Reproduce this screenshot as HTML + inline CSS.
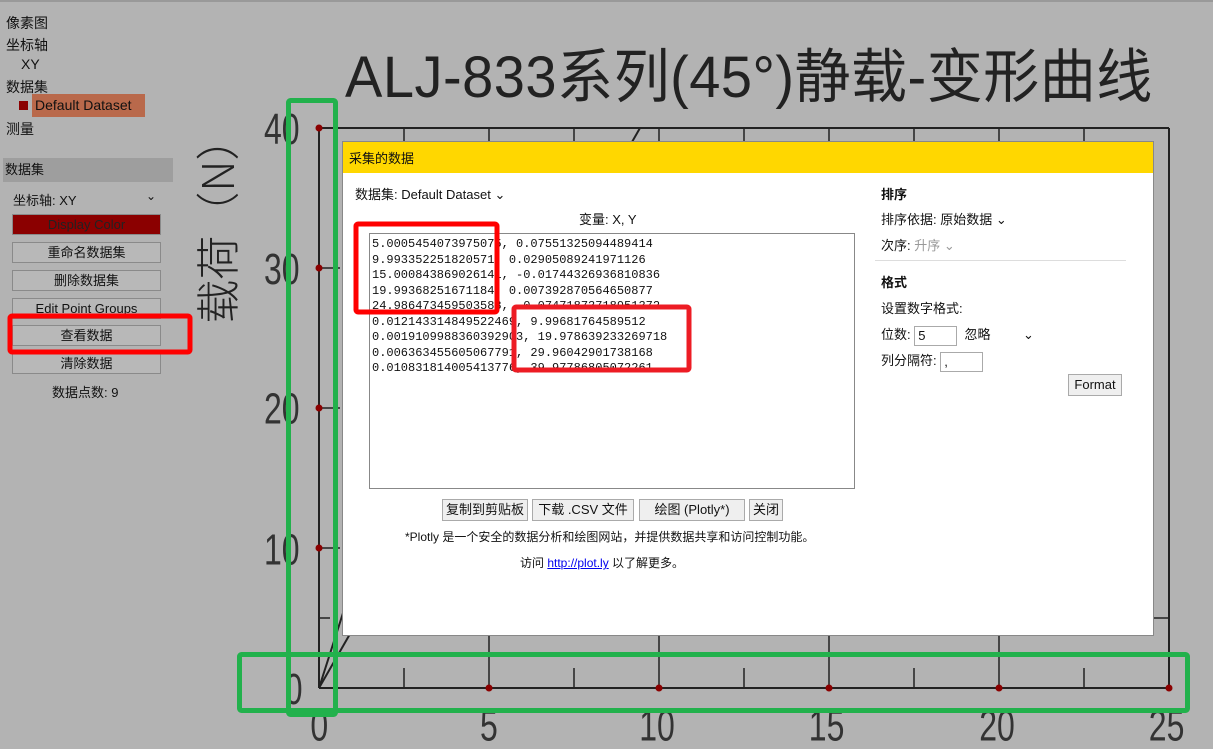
<!DOCTYPE html>
<html><head><meta charset="utf-8"><style>
body{margin:0;width:1213px;height:749px;background:#b3b3b3;position:relative;overflow:hidden;font-family:"Liberation Sans","Noto Sans CJK SC",sans-serif;color:#111}
.a{position:absolute}
.side{font-size:14px}
.btn{position:absolute;left:12px;width:147px;height:19px;border:1px solid #8a8a8a;background:#b8b8b8;font-size:13px;text-align:center;line-height:19px}
.mb{position:absolute;top:357px;height:20px;border:1px solid #aaa;background:#efefef;font-size:13px;line-height:20px;text-align:center}
pre{margin:0;font-family:"Liberation Mono","Noto Sans CJK SC",monospace;font-size:12px;line-height:15.5px}
</style></head><body>
<div class="a" style="left:0;top:0;width:1213px;height:2px;background:#999"></div>
<div class="side">
<div class="a" style="left:6px;top:13px">像素图</div>
<div class="a" style="left:6px;top:35px">坐标轴</div>
<div class="a" style="left:21px;top:56px">XY</div>
<div class="a" style="left:6px;top:77px">数据集</div>
<div class="a" style="left:19px;top:101px;width:9px;height:9px;background:#8b0000"></div>
<div class="a" style="left:32px;top:94px;width:113px;height:23px;background:#b9694b;line-height:23px;padding-left:3px;box-sizing:border-box">Default Dataset</div>
<div class="a" style="left:6px;top:119px">测量</div>
<div class="a" style="left:3px;top:158px;width:168px;height:24px;background:#9e9e9e;font-size:13px;line-height:24px;padding-left:2px">数据集</div>
<div class="a" style="left:13px;top:190px;font-size:13px">坐标轴: XY</div>
<div class="a" style="left:146px;top:189px;font-size:12px">⌄</div>
<div class="btn" style="top:214px;background:#8b0000;color:#222">Display Color</div>
<div class="btn" style="top:242px">重命名数据集</div>
<div class="btn" style="top:270px">删除数据集</div>
<div class="btn" style="top:298px">Edit Point Groups</div>
<div class="btn" style="top:325px">查看数据</div>
<div class="btn" style="top:353px">清除数据</div>
<div class="a" style="left:52px;top:382px;font-size:13px">数据点数: 9</div>
</div>
<div class="a" style="left:345px;top:30px;font-size:56px;color:#222;letter-spacing:0.5px;white-space:nowrap;transform:scaleY(1.05);transform-origin:left top">ALJ-833系列(45°)静载-变形曲线</div>
<div class="a" style="left:105px;top:196px;width:220px;height:48px;font-size:44px;line-height:48px;color:#222;transform:rotate(-90deg);white-space:nowrap;font-family:'Noto Sans CJK SC',sans-serif;font-weight:300;text-align:center">载荷（N）</div>
<svg class="a" style="left:0;top:0" width="1213" height="749">
<g stroke="#222" stroke-width="2" fill="none">
<line x1="319" y1="128" x2="1169" y2="128"/><line x1="319" y1="128" x2="319" y2="688"/><line x1="319" y1="688" x2="1169" y2="688"/><line x1="1169" y1="128" x2="1169" y2="688"/>
<line x1="319" y1="688" x2="640" y2="128"/><line x1="319" y1="688" x2="360" y2="560"/>
</g>
<g stroke="#222" stroke-width="1.5">
<line x1="404" y1="128" x2="404" y2="142"/><line x1="489" y1="128" x2="489" y2="142"/><line x1="574" y1="128" x2="574" y2="142"/><line x1="659" y1="128" x2="659" y2="142"/><line x1="744" y1="128" x2="744" y2="142"/><line x1="829" y1="128" x2="829" y2="142"/><line x1="914" y1="128" x2="914" y2="142"/><line x1="999" y1="128" x2="999" y2="142"/><line x1="1084" y1="128" x2="1084" y2="142"/>
<line x1="404" y1="688" x2="404" y2="668"/><line x1="489" y1="688" x2="489" y2="636"/><line x1="574" y1="688" x2="574" y2="668"/><line x1="659" y1="688" x2="659" y2="636"/><line x1="744" y1="688" x2="744" y2="668"/><line x1="829" y1="688" x2="829" y2="636"/><line x1="914" y1="688" x2="914" y2="668"/><line x1="999" y1="688" x2="999" y2="636"/><line x1="1084" y1="688" x2="1084" y2="668"/>
<line x1="319" y1="268" x2="340" y2="268"/><line x1="319" y1="408" x2="340" y2="408"/><line x1="319" y1="548" x2="340" y2="548"/><line x1="319" y1="618" x2="330" y2="618"/>
<line x1="1150" y1="618" x2="1169" y2="618"/>
</g>
<g font-family="Liberation Sans" font-size="40" fill="#333">
<g transform="scale(0.8,1.1)">
<text x="330" y="131">40</text><text x="330" y="258">30</text><text x="330" y="385">20</text><text x="330" y="513">10</text><text x="356" y="640">0</text>
<text x="388" y="673">0</text><text x="600" y="673">5</text><text x="799" y="673">10</text><text x="1011" y="673">15</text><text x="1224" y="673">20</text><text x="1436" y="673">25</text>
</g></g>
<g fill="#8b0000"><circle cx="319" cy="128" r="3.5"/><circle cx="319" cy="268" r="3.5"/><circle cx="319" cy="408" r="3.5"/><circle cx="319" cy="548" r="3.5"/><circle cx="489" cy="688" r="3.5"/><circle cx="659" cy="688" r="3.5"/><circle cx="829" cy="688" r="3.5"/><circle cx="999" cy="688" r="3.5"/><circle cx="1169" cy="688" r="3.5"/></g>
</svg>
<div class="a" style="left:342px;top:141px;width:812px;height:495px;background:#fff;border:1px solid #888;box-sizing:border-box">
<div style="height:31px;background:#ffd700;font-size:13px;line-height:33px;padding-left:6px">采集的数据</div>
<div class="a" style="left:12px;top:42px;font-size:13px">数据集: Default Dataset ⌄</div>
<div class="a" style="left:236px;top:67px;font-size:13px">变量: X, Y</div>
<div class="a" style="left:26px;top:91px;width:486px;height:256px;border:1px solid #888;box-sizing:border-box;padding:3px 2px"><pre>5.0005454073975075, 0.07551325094489414
9.993352251820571, 0.02905089241971126
15.000843869026141, -0.01744326936810836
19.99368251671184, 0.007392870564650877
24.986473459503588, -0.07471873718951372
0.012143314849522469, 9.99681764589512
0.0019109988360392903, 19.978639233269718
0.006363455605067791, 29.96042901738168
0.010831814005413776, 39.97786805072261</pre></div>
<div class="mb" style="left:99px;width:84px">复制到剪贴板</div>
<div class="mb" style="left:189px;width:100px">下载 .CSV 文件</div>
<div class="mb" style="left:296px;width:104px">绘图 (Plotly*)</div>
<div class="mb" style="left:406px;width:32px">关闭</div>
<div class="a" style="left:62px;top:386px;font-size:12px">*Plotly 是一个安全的数据分析和绘图网站，并提供数据共享和访问控制功能。</div>
<div class="a" style="left:177px;top:412px;font-size:12px">访问 <span style="color:#00e;text-decoration:underline">http://plot.ly</span> 以了解更多。</div>
<div class="a" style="left:538px;top:42px;font-size:13px;font-weight:bold">排序</div>
<div class="a" style="left:538px;top:67px;font-size:13px">排序依据: 原始数据 ⌄</div>
<div class="a" style="left:538px;top:93px;font-size:13px"><span>次序:</span> <span style="color:#999">升序 ⌄</span></div>
<div class="a" style="left:532px;top:118px;width:251px;height:1px;background:#ddd"></div>
<div class="a" style="left:538px;top:130px;font-size:13px;font-weight:bold">格式</div>
<div class="a" style="left:538px;top:156px;font-size:13px">设置数字格式:</div>
<div class="a" style="left:538px;top:182px;font-size:13px">位数: <span style="display:inline-block;width:38px;height:18px;border:1px solid #aaa;vertical-align:middle;padding-left:3px;line-height:18px">5</span> &nbsp;忽略 &nbsp;&nbsp;&nbsp;&nbsp;&nbsp;&nbsp;&nbsp;&nbsp;⌄</div>
<div class="a" style="left:538px;top:208px;font-size:13px">列分隔符: <span style="display:inline-block;width:38px;height:18px;border:1px solid #aaa;vertical-align:middle;padding-left:3px;line-height:18px">,</span></div>
<div class="a" style="left:725px;top:232px;width:52px;height:20px;border:1px solid #aaa;background:#efefef;font-size:13px;line-height:20px;text-align:center">Format</div>
</div>
<svg class="a" style="left:0;top:0" width="1213" height="749" fill="none">
<rect x="288.5" y="100.5" width="47" height="614" rx="2" stroke="#22b14c" stroke-width="5"/>
<rect x="239.5" y="654.5" width="948" height="56" rx="2" stroke="#22b14c" stroke-width="5"/>
<rect x="356" y="224" width="141" height="88" rx="2" stroke="#f00" stroke-width="5"/>
<rect x="514" y="307" width="175" height="63" rx="2" stroke="#ed1c24" stroke-width="5"/>
<rect x="10" y="316" width="180" height="36" rx="2" stroke="#f00" stroke-width="5"/>
</svg>
</body></html>
